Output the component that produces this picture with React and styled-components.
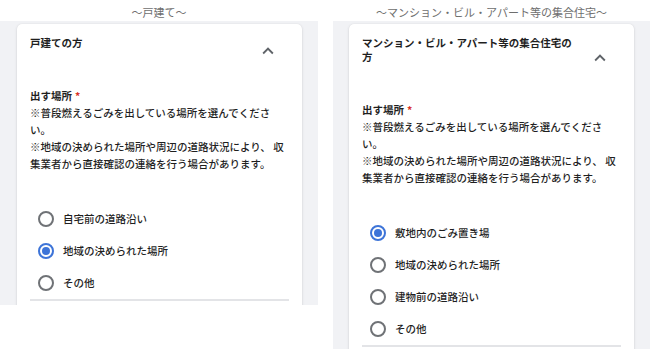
import React from 'react';
import styled, { createGlobalStyle } from 'styled-components';

const GlobalStyle = createGlobalStyle`
  html, body { margin: 0; padding: 0; background: #fff; }
  body {
    font-family: "Noto Sans CJK JP", "Noto Sans", sans-serif;
    color: #1f1f1f;
  }
  * { box-sizing: border-box; }
`;

const Page = styled.div`
  display: grid;
  grid-template-columns: 318px 317px;
  column-gap: 15px;
  width: 650px;
  height: 349px;
  overflow: hidden;
`;

const Column = styled.section`
  display: flex;
  flex-direction: column;
`;

const Caption = styled.div`
  height: 21px;
  padding-top: 4px;
  line-height: 17px;
  font-size: 11px;
  color: #6e6e6e;
  text-align: center;
  white-space: nowrap;
`;

const Panel = styled.div`
  background: #f1f2f5;
  height: ${(p) => p.$height}px;
  padding: 3px 16px 0 ${(p) => p.$inset}px;
  overflow: hidden;
`;

const Card = styled.div`
  width: 285px;
  background: #fff;
  border-radius: 5px;
  box-shadow: 0 1px 3px rgba(60, 64, 67, 0.16), 0 0 1px rgba(60, 64, 67, 0.12);
  padding: 0 13px 20px;
`;

const Header = styled.div`
  display: flex;
  align-items: center;
  gap: 12px;
  padding-right: 10px;
`;

const Title = styled.div`
  flex: 1;
  padding: 12px 0;
  font-size: 10.5px;
  font-weight: 700;
  line-height: 14px;
`;

const Toggle = styled.span`
  display: flex;
  width: 22px;
  height: 22px;
  margin-top: 15px;
  flex: none;
`;

const Label = styled.div`
  margin-top: 25px;
  font-size: 10.5px;
  font-weight: 700;
  line-height: 17px;
`;

const Required = styled.span`
  color: #d93025;
  margin-left: 3px;
`;

const Note = styled.p`
  margin: 0;
  font-size: 10.5px;
  font-weight: 500;
  line-height: 17px;
`;

const Options = styled.div`
  display: flex;
  flex-direction: column;
  margin-top: 31px;
  border-bottom: 2px solid #e3e4e7;
`;

const Option = styled.label`
  display: flex;
  align-items: center;
  gap: 9px;
  height: 32px;
  padding-left: 8px;
  font-size: 10.5px;
  font-weight: 500;
  line-height: 14px;
`;

const Radio = styled.span`
  display: flex;
  align-items: center;
  justify-content: center;
  width: 16px;
  height: 16px;
  border-radius: 50%;
  border: 2px solid ${(p) => (p.$checked ? '#3d74d8' : '#6f7276')};
  flex: none;

  &::after {
    content: '';
    width: 8px;
    height: 8px;
    border-radius: 50%;
    background: ${(p) => (p.$checked ? '#3d74d8' : 'transparent')};
  }
`;

const Chevron = () => (
  <svg width="22" height="22" viewBox="0 0 24 24" aria-hidden="true">
    <path d="M12 8l-6 6 1.41 1.41L12 10.83l4.59 4.58L18 14z" fill="#5f6368" />
  </svg>
);

const sections = [
  {
    caption: '〜戸建て〜',
    title: '戸建ての方',
    height: 284,
    inset: 17,
    options: ['自宅前の道路沿い', '地域の決められた場所', 'その他'],
    checked: 1,
  },
  {
    caption: '〜マンション・ビル・アパート等の集合住宅〜',
    title: 'マンション・ビル・アパート等の集合住宅の方',
    height: 328,
    inset: 16,
    options: ['敷地内のごみ置き場', '地域の決められた場所', '建物前の道路沿い', 'その他'],
    checked: 0,
  },
];

export default function App() {
  return (
    <>
      <GlobalStyle />
      <Page>
        {sections.map((s) => (
          <Column key={s.title}>
            <Caption>{s.caption}</Caption>
            <Panel $height={s.height} $inset={s.inset}>
              <Card>
                <Header>
                  <Title>{s.title}</Title>
                  <Toggle>
                    <Chevron />
                  </Toggle>
                </Header>
                <Label>
                  出す場所<Required>*</Required>
                </Label>
                <Note>
                  ※普段燃えるごみを出している場所を選んでくださ
                  <br />
                  い。
                  <br />
                  ※地域の決められた場所や周辺の道路状況により、 収
                  <br />
                  集業者から直接確認の連絡を行う場合があります。
                </Note>
                <Options>
                  {s.options.map((o, i) => (
                    <Option key={o}>
                      <Radio $checked={i === s.checked} />
                      {o}
                    </Option>
                  ))}
                </Options>
              </Card>
            </Panel>
          </Column>
        ))}
      </Page>
    </>
  );
}
